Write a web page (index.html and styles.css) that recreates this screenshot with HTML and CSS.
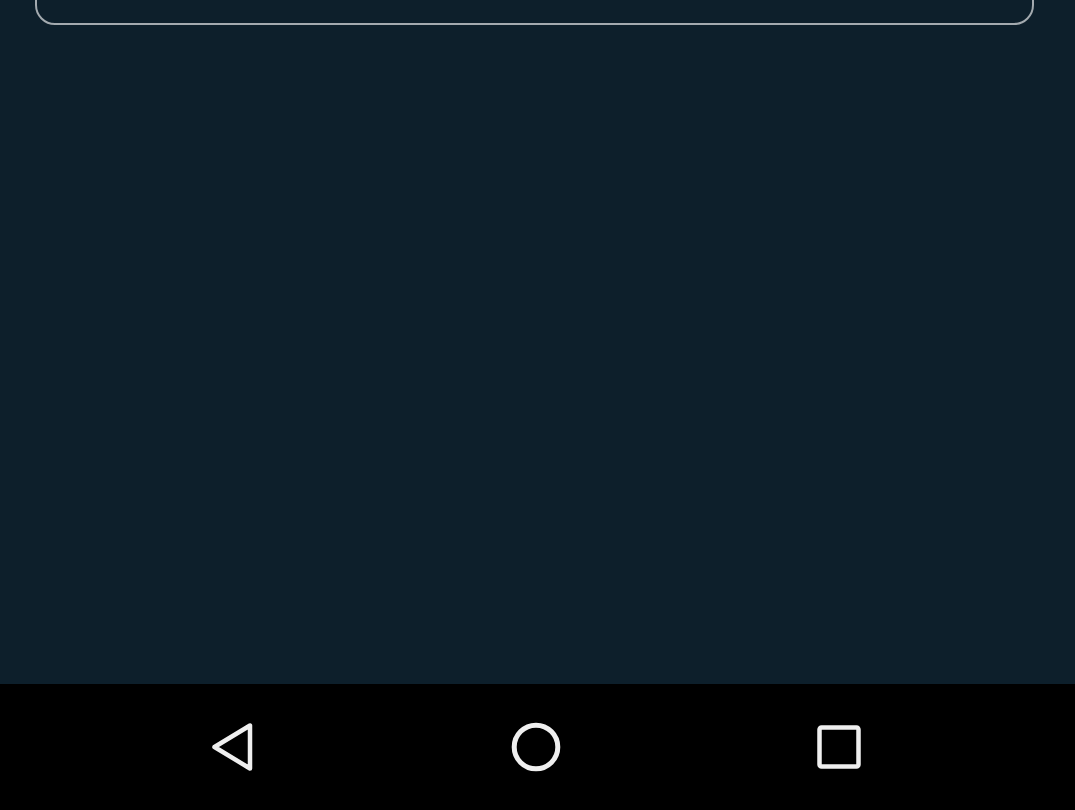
FILE: index.html
```html
<!DOCTYPE html>
<html>
<head>
<meta charset="utf-8">
<link rel="stylesheet" href="styles.css">
</head>
<body>
<div class="screen">
  <main class="content">
    <div class="card"></div>
  </main>
  <nav class="navbar">
    <svg class="nav-icon" width="60" height="60" viewBox="0 0 60 60" aria-label="Back">
      <path d="M48 8.5 L48 51.5 L12.5 30 Z" fill="none" stroke="#efefef" stroke-width="4.5" stroke-linejoin="round"/>
    </svg>
    <svg class="nav-icon" width="60" height="60" viewBox="0 0 60 60" aria-label="Home">
      <circle cx="30" cy="30" r="21.8" fill="none" stroke="#efefef" stroke-width="5"/>
    </svg>
    <svg class="nav-icon" width="60" height="60" viewBox="0 0 60 60" aria-label="Recents">
      <rect x="10.5" y="10.5" width="39" height="39" rx="2" fill="none" stroke="#efefef" stroke-width="4.5"/>
    </svg>
  </nav>
</div>
</body>
</html>
```
FILE: styles.css
```css
html, body {
  margin: 0;
  padding: 0;
  background: #0d1f2b;
  font-family: "Roboto", "Liberation Sans", sans-serif;
}
.screen {
  width: 1075px;
  height: 810px;
  display: flex;
  flex-direction: column;
  overflow: hidden;
}
.content {
  flex: 1;
  background: #0d1f2b;
  padding: 0 41px 0 35px;
  overflow: hidden;
}
.card {
  height: 100px;
  margin-top: -75px;
  border: 2.5px solid #a3aaaf;
  border-radius: 20px;
  box-sizing: border-box;
}
.navbar {
  height: 126px;
  flex: none;
  background: #000;
  display: flex;
  align-items: center;
  box-sizing: border-box;
}
.nav-icon {
  display: block;
}
.nav-icon:nth-child(1) { margin-left: 202px; }
.nav-icon:nth-child(2) { margin-left: 244px; }
.nav-icon:nth-child(3) { margin-left: 243px; }
```
